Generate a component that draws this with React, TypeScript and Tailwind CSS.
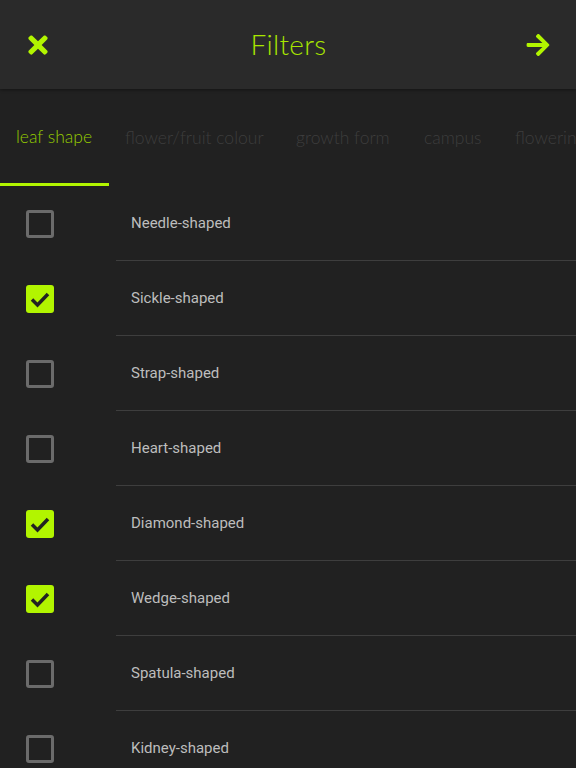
import { FaTimes, FaArrowRight } from "react-icons/fa";

const tabs = [
  { label: "leaf shape", w: "w-[109px]" },
  { label: "flower/fruit colour", w: "w-[171px]" },
  { label: "growth form", w: "w-[128px]" },
  { label: "campus", w: "w-[91px]" },
  { label: "flowering", w: "w-[110px]" },
];

const items = [
  { label: "Needle-shaped", checked: false },
  { label: "Sickle-shaped", checked: true },
  { label: "Strap-shaped", checked: false },
  { label: "Heart-shaped", checked: false },
  { label: "Diamond-shaped", checked: true },
  { label: "Wedge-shaped", checked: true },
  { label: "Spatula-shaped", checked: false },
  { label: "Kidney-shaped", checked: false },
];

const Checkbox = ({ checked }: { checked: boolean }) =>
  checked ? (
    <div className="w-[28px] h-[28px] rounded-[3px] bg-[#b2f500] flex items-center justify-center">
      <svg width="24" height="24" viewBox="0 0 24 24">
        <path d="M4 12.5 L9.5 18 L20 7" fill="none" stroke="#222222" strokeWidth="3.5" />
      </svg>
    </div>
  ) : (
    <div className="w-[28px] h-[28px] rounded-[3px] border-[3px] border-[#6b6b6b]" />
  );

export default function App() {
  return (
    <div className="w-[576px] h-[768px] overflow-hidden bg-[#212121] flex flex-col">
      {/* header */}
      <div className="h-[89px] shrink-0 bg-[#2a2a2a] flex items-center justify-between pl-[24px] pr-[25px] shadow-[0_1px_3px_rgba(0,0,0,0.4)]">
        <FaTimes className="text-[#b2f500] text-[28px]" />
        <div className="font-['Lato'] font-light text-[28px] text-[#a8e600] tracking-[0.3px] -mt-[2px]">Filters</div>
        <FaArrowRight className="text-[#b2f500] text-[26px]" />
      </div>

      {/* tabs */}
      <div className="h-[97px] shrink-0 flex items-stretch whitespace-nowrap overflow-hidden font-['Lato'] font-light text-[17.5px]">
        {tabs.map((t, i) => (
          <div
            key={t.label}
            className={
              i === 0
                ? `${t.w} pl-[16px] pt-[35px] text-[#95cc00] border-b-[3px] border-[#b2f500] shrink-0`
                : `${t.w} pl-[16px] pt-[36px] text-[#3d3d3d] shrink-0`
            }
          >
            {t.label}
          </div>
        ))}
      </div>

      {/* options */}
      <div className="flex flex-col">
        {items.map((it, i) => (
          <div key={it.label} className="flex h-[75px] shrink-0">
            <div className="w-[116px] shrink-0 flex items-center pl-[26px]">
              <Checkbox checked={it.checked} />
            </div>
            <div
              className={
                i === items.length - 1
                  ? "flex-1 flex items-center pl-[15px] font-['Roboto'] text-[15px] text-[#bdbdbd]"
                  : "flex-1 flex items-center pl-[15px] font-['Roboto'] text-[15px] text-[#bdbdbd] border-b border-[#3e3e3e]"
              }
            >
              {it.label}
            </div>
          </div>
        ))}
      </div>
    </div>
  );
}
